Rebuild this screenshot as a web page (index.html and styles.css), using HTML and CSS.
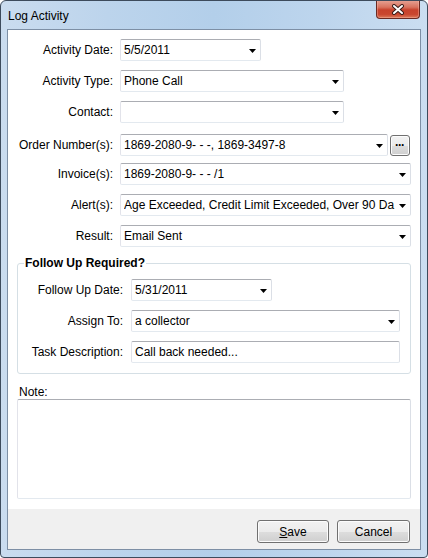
FILE: index.html
```html
<!DOCTYPE html>
<html>
<head>
<meta charset="utf-8">
<title>Log Activity</title>
<link rel="stylesheet" href="styles.css">
</head>
<body>
<div class="window">
  <div class="titlebar">
    <span class="title">Log Activity</span>
    <div class="close">
      <svg width="14" height="11" viewBox="0 0 14 11">
        <path d="M3 2 L11 9 M11 2 L3 9" stroke="#3a1d19" stroke-width="4" stroke-linecap="round"/>
        <path d="M3 2 L11 9 M11 2 L3 9" stroke="#ffffff" stroke-width="2" stroke-linecap="round"/>
      </svg>
    </div>
  </div>
  <div class="client">
    <div class="main">
      <div class="row">
        <label class="lbl">Activity Date:</label>
        <div class="field dd w141"><span class="val">5/5/2011</span><svg class="arrow" width="7" height="4" viewBox="0 0 7 4"><polygon points="0,0 7,0 3.5,4" fill="#000"/></svg></div>
      </div>
      <div class="row">
        <label class="lbl">Activity Type:</label>
        <div class="field dd w224"><span class="val">Phone Call</span><svg class="arrow" width="7" height="4" viewBox="0 0 7 4"><polygon points="0,0 7,0 3.5,4" fill="#000"/></svg></div>
      </div>
      <div class="row">
        <label class="lbl">Contact:</label>
        <div class="field dd w224"><span class="val"></span><svg class="arrow" width="7" height="4" viewBox="0 0 7 4"><polygon points="0,0 7,0 3.5,4" fill="#000"/></svg></div>
      </div>
      <div class="row row-order">
        <label class="lbl">Order Number(s):</label>
        <div class="combo">
          <div class="field dd w268"><span class="val">1869-2080-9- - -, 1869-3497-8</span><svg class="arrow" width="7" height="4" viewBox="0 0 7 4"><polygon points="0,0 7,0 3.5,4" fill="#000"/></svg></div>
          <div class="ellipsis"><span class="dots">···</span></div>
        </div>
      </div>
      <div class="row">
        <label class="lbl">Invoice(s):</label>
        <div class="field dd w291"><span class="val">1869-2080-9- - - /1</span><svg class="arrow" width="7" height="4" viewBox="0 0 7 4"><polygon points="0,0 7,0 3.5,4" fill="#000"/></svg></div>
      </div>
      <div class="row">
        <label class="lbl">Alert(s):</label>
        <div class="field dd w291"><span class="val">Age Exceeded, Credit Limit Exceeded, Over 90 Da</span><svg class="arrow" width="7" height="4" viewBox="0 0 7 4"><polygon points="0,0 7,0 3.5,4" fill="#000"/></svg></div>
      </div>
      <div class="row">
        <label class="lbl">Result:</label>
        <div class="field dd w291"><span class="val">Email Sent</span><svg class="arrow" width="7" height="4" viewBox="0 0 7 4"><polygon points="0,0 7,0 3.5,4" fill="#000"/></svg></div>
      </div>

      <fieldset class="group">
        <legend class="legend">Follow Up Required?</legend>
        <div class="group-body">
          <div class="grow">
            <label class="lbl">Follow Up Date:</label>
            <div class="field dd w141"><span class="val">5/31/2011</span><svg class="arrow" width="7" height="4" viewBox="0 0 7 4"><polygon points="0,0 7,0 3.5,4" fill="#000"/></svg></div>
          </div>
          <div class="grow">
            <label class="lbl">Assign To:</label>
            <div class="field dd w269"><span class="val">a collector</span><svg class="arrow" width="7" height="4" viewBox="0 0 7 4"><polygon points="0,0 7,0 3.5,4" fill="#000"/></svg></div>
          </div>
          <div class="grow">
            <label class="lbl">Task Description:</label>
            <div class="field w269"><span class="val">Call back needed...</span></div>
          </div>
        </div>
      </fieldset>

      <div class="note">
        <div class="note-label">Note:</div>
        <div class="textarea"></div>
      </div>
    </div>
    <div class="footer">
      <div class="btn w72"><span><u>S</u>ave</span></div>
      <div class="btn w73"><span>Cancel</span></div>
    </div>
  </div>
</div>
</body>
</html>
```
FILE: styles.css
```css
html, body {
  margin: 0;
  padding: 0;
  background: #ffffff;
}

body {
  font-family: "Liberation Sans", Arial, sans-serif;
  font-size: 12px;
  color: #000;
}

.window {
  width: 428px;
  height: 558px;
  box-sizing: border-box;
  border: 1px solid #3d4b5c;
  border-radius: 6px 6px 4px 4px;
  background: linear-gradient(90deg, #cadcef 0%, #bcd4ec 25%, #b3cfea 50%, #bdd5ed 75%, #cbdef1 100%);
  display: flex;
  flex-direction: column;
  padding: 0 6px 7px 6px;
  overflow: hidden;
}

.titlebar {
  height: 28px;
  display: flex;
  justify-content: space-between;
  align-items: flex-start;
  flex: none;
}

.title {
  font-family: "Liberation Sans", Arial, sans-serif;
  font-size: 12px;
  color: #000;
  margin-top: 8px;
  margin-left: 1px;
}

.close {
  width: 44px;
  height: 19px;
  box-sizing: border-box;
  margin-right: 1px;
  margin-top: -1px;
  border: 1px solid #6a2a22;
  border-top: none;
  border-radius: 0 0 4px 4px;
  background: linear-gradient(180deg, #e7a597 0%, #d8735f 40%, #c7422c 55%, #c9472f 80%, #dc7a5a 100%);
  display: flex;
  align-items: center;
  justify-content: center;
  box-shadow: inset 0 0 0 1px rgba(255, 200, 190, 0.35);
}

.client {
  flex: 1;
  border: 1px solid #7d8fa5;
  background: #ffffff;
  display: flex;
  flex-direction: column;
}

.main {
  flex: 1;
  padding: 9px 9px 0 9px;
  display: flex;
  flex-direction: column;
  gap: 9px;
}

.row {
  display: grid;
  grid-template-columns: 96px auto;
  column-gap: 7px;
  align-items: center;
  height: 22px;
}

.row-order {
  margin-top: 2px;
  margin-bottom: -2px;
}

.lbl {
  text-align: right;
  white-space: nowrap;
}

.field {
  height: 22px;
  box-sizing: border-box;
  border: 1px solid;
  border-color: #abadb3 #dbdfe6 #e3e9ef #e2e3ea;
  border-radius: 2px;
  background: #fff;
  display: flex;
  align-items: center;
  padding-left: 3px;
  overflow: hidden;
}

.val {
  flex: 1;
  white-space: nowrap;
  overflow: hidden;
  line-height: 14px;
}

.arrow {
  flex: none;
  margin: 1px 4px 0 2px;
}

.w141 { width: 141px; }
.w224 { width: 224px; }
.w268 { width: 268px; }
.w269 { width: 269px; }
.w291 { width: 291px; }

.combo {
  display: flex;
  align-items: center;
  gap: 2px;
}

.ellipsis {
  width: 20px;
  height: 21px;
  box-sizing: border-box;
  border: 1px solid #707070;
  border-radius: 3px;
  background: linear-gradient(180deg, #f2f2f2 0%, #ebebeb 50%, #dddddd 51%, #cfcfcf 100%);
  display: flex;
  align-items: center;
  justify-content: center;
  box-shadow: inset 0 0 0 1px #fcfcfc;
}

.dots {
  font-weight: bold;
  font-size: 12px;
  line-height: 10px;
  letter-spacing: -1px;
  margin-left: -1px;
}

.group {
  margin: 0;
  padding: 0;
  border: 1px solid #d5dfe5;
  border-radius: 3px;
  min-width: 0;
}

.legend {
  font-weight: bold;
  font-size: 12px;
  line-height: 14px;
  padding: 0 1px;
  margin-left: 6px;
}

.group-body {
  padding: 9px 11px 10px 10px;
  display: flex;
  flex-direction: column;
  gap: 9px;
}

.grow {
  display: grid;
  grid-template-columns: 95px auto;
  column-gap: 8px;
  align-items: center;
  height: 22px;
}

.note {
  margin-top: 2px;
  display: flex;
  flex-direction: column;
}

.note-label {
  line-height: 14px;
  padding-left: 2px;
}

.textarea {
  height: 100px;
  box-sizing: border-box;
  border: 1px solid;
  border-color: #abadb3 #dbdfe6 #e3e9ef #e2e3ea;
  border-radius: 2px;
  background: #fff;
}

.footer {
  height: 40px;
  flex: none;
  background: #f0f0f0;
  display: flex;
  justify-content: flex-end;
  align-items: flex-start;
  gap: 8px;
  padding: 11px 10px 0 0;
  box-sizing: border-box;
}

.btn {
  height: 23px;
  box-sizing: border-box;
  border: 1px solid #707070;
  border-radius: 3px;
  background: linear-gradient(180deg, #f2f2f2 0%, #ebebeb 50%, #dddddd 51%, #cfcfcf 100%);
  box-shadow: inset 0 0 0 1px #fcfcfc;
  display: flex;
  align-items: center;
  justify-content: center;
  font-size: 12px;
}

.w72 { width: 72px; }
.w73 { width: 73px; }
```
